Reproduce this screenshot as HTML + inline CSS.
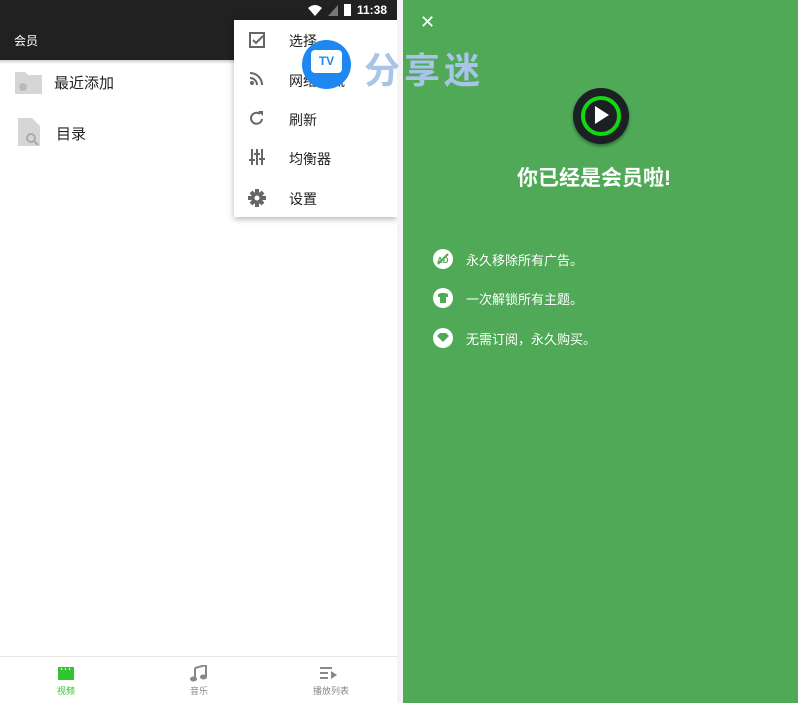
<!DOCTYPE html>
<html><head><meta charset="utf-8"><style>
*{margin:0;padding:0;box-sizing:border-box}
body{width:798px;height:703px;overflow:hidden;background:#fff;font-family:"Liberation Sans","Noto Sans CJK SC",sans-serif;position:relative}
.abs{position:absolute}
</style></head><body>
<div class="abs" style="left:0;top:0;width:397px;height:703px;background:#fff">
 <div class="abs" style="left:0;top:0;width:397px;height:60px;background:#212121"></div>
 <div class="abs" style="left:0;top:60px;width:397px;height:4px;background:linear-gradient(#ccc,#fff)"></div>
 <div class="abs" style="left:14px;top:32px;color:#fff;font-size:12px">会员</div>
 <div class="abs" style="right:10px;top:3px;color:#fff;font-size:12px;font-weight:bold;display:flex;align-items:center;gap:6px">
  <svg width="14" height="11"><path d="M0 3Q7-3 14 3L7 11Z" fill="#fff"/></svg>
  <svg width="10" height="11"><path d="M10 0V11H0Z" fill="#777"/></svg>
  <svg width="7" height="12"><rect width="7" height="12" fill="#fff"/></svg>
  <span>11:38</span></div>
 <svg class="abs" style="left:15px;top:70px" width="27" height="24"><path d="M0 2h10l3 3h14v19H0z" fill="#d6d6d6"/><circle cx="8" cy="17" r="4" fill="#bbb"/></svg>
 <div class="abs" style="left:54px;top:72px;font-size:15px;color:#222">最近添加</div>
 <svg class="abs" style="left:18px;top:118px" width="24" height="28"><path d="M0 0h14l8 8v20H0z" fill="#d6d6d6"/><circle cx="13" cy="20" r="4" fill="none" stroke="#aaa" stroke-width="2"/><path d="M16 23l4 4" stroke="#aaa" stroke-width="2"/></svg>
 <div class="abs" style="left:56px;top:123px;font-size:15px;color:#222">目录</div>
 <div class="abs" style="left:0;top:656px;width:397px;height:1px;background:#e6e6e6"></div>
 <svg class="abs" style="left:58px;top:667px" width="16" height="13"><rect width="16" height="13" fill="#2ec52e"/><path d="M3 1l1 2M7 1l1 2M11 1l1 2" stroke="#fff" stroke-width="1"/></svg>
 <div class="abs" style="left:57px;top:684px;font-size:9px;color:#2ec52e">视频</div>
 <svg class="abs" style="left:190px;top:665px" width="17" height="17"><path d="M5 3l11-3v12" fill="none" stroke="#888" stroke-width="2"/><path d="M5 3v11" stroke="#888" stroke-width="2"/><ellipse cx="3.5" cy="14" rx="3.5" ry="2.5" fill="#888"/><ellipse cx="13.5" cy="12" rx="3.5" ry="2.5" fill="#888"/></svg>
 <div class="abs" style="left:190px;top:684px;font-size:9px;color:#888">音乐</div>
 <svg class="abs" style="left:320px;top:667px" width="18" height="12"><path d="M0 1h12M0 6h8M0 11h8" stroke="#888" stroke-width="2"/><path d="M11 4l6 4-6 4z" fill="#888"/></svg>
 <div class="abs" style="left:313px;top:684px;font-size:9px;color:#888">播放列表</div>
 <div class="abs" style="left:234px;top:20px;width:163px;height:197px;background:#fff;box-shadow:0 2px 6px rgba(0,0,0,.3)">
  <svg class="abs" style="left:15px;top:12px" width="16" height="16"><path d="M1 1h14v14H1z" fill="none" stroke="#666" stroke-width="2"/><path d="M4 8l3 3 7-7" fill="none" stroke="#666" stroke-width="2"/></svg>
  <div class="abs" style="left:55px;top:11px;font-size:14px;color:#222">选择</div>
  <svg class="abs" style="left:16px;top:52px" width="13" height="13"><circle cx="2" cy="11" r="2" fill="#666"/><path d="M0 6a7 7 0 0 1 7 7M0 1a12 12 0 0 1 12 12" fill="none" stroke="#666" stroke-width="2"/></svg>
  <div class="abs" style="left:55px;top:51px;font-size:14px;color:#222">网络串流</div>
  <svg class="abs" style="left:15px;top:91px" width="15" height="15"><path d="M13 8A5.5 5.5 0 1 1 11 3" fill="none" stroke="#666" stroke-width="2"/><path d="M9 0h5v5z" fill="#666"/></svg>
  <div class="abs" style="left:55px;top:90px;font-size:14px;color:#222">刷新</div>
  <svg class="abs" style="left:15px;top:129px" width="16" height="16"><path d="M3 0v16M8 0v16M13 0v16" stroke="#666" stroke-width="2"/><path d="M0 11h6M5 5h6M10 10h6" stroke="#666" stroke-width="2"/></svg>
  <div class="abs" style="left:55px;top:129px;font-size:14px;color:#222">均衡器</div>
  <svg class="abs" style="left:14px;top:169px" width="18" height="18"><g stroke="#666" stroke-width="4"><path d="M9 0v18M0 9h18M3 3l12 12M15 3L3 15"/></g><circle cx="9" cy="9" r="6" fill="#666"/><circle cx="9" cy="9" r="2.5" fill="#fff"/></svg>
  <div class="abs" style="left:55px;top:169px;font-size:14px;color:#222">设置</div>
 </div>
 <div class="abs" style="left:302px;top:40px;width:49px;height:49px;border-radius:50%;background:#1e88f0"></div>
 <div class="abs" style="left:311px;top:50px;width:31px;height:23px;border-radius:4px;background:#fff;color:#1e88f0;font-size:12px;font-weight:bold;text-align:center;line-height:23px">TV</div>
</div>
<div class="abs" style="left:397px;top:0;width:6px;height:703px;background:#f4f4f4"></div>
<div class="abs" style="left:403px;top:0;width:395px;height:703px;background:#4fa957">
 <div class="abs" style="left:17px;top:12px;color:#fff;font-size:18px">✕</div>
 <div class="abs" style="left:170px;top:88px;width:56px;height:56px;border-radius:50%;background:#1c1f24;box-shadow:0 2px 3px rgba(0,0,0,.4)"></div>
 <div class="abs" style="left:178px;top:96px;width:40px;height:40px;border-radius:50%;border:4px solid #12d812"></div>
 <svg class="abs" style="left:192px;top:106px" width="14" height="18"><path d="M0 0l14 9-14 9z" fill="#fff"/></svg>
 <div class="abs" style="left:0;width:382px;top:162px;text-align:center;color:#fff;font-size:21px;font-weight:bold">你已经是会员啦!</div>
 <svg class="abs" style="left:30px;top:249px" width="20" height="20"><circle cx="10" cy="10" r="10" fill="#fff"/><path d="M5 15L15 5" stroke="#4fa957" stroke-width="2"/><text x="4" y="14" font-size="8" font-weight="bold" fill="#4fa957" font-family="Liberation Sans">AD</text></svg>
 <div class="abs" style="left:63px;top:250px;color:#fff;font-size:13px">永久移除所有广告。</div>
 <svg class="abs" style="left:30px;top:288px" width="20" height="20"><circle cx="10" cy="10" r="10" fill="#fff"/><path d="M5 6l3-1h4l3 1v3h-2v6H7V9H5z" fill="#4fa957"/></svg>
 <div class="abs" style="left:63px;top:289px;color:#fff;font-size:13px">一次解锁所有主题。</div>
 <svg class="abs" style="left:30px;top:328px" width="20" height="20"><circle cx="10" cy="10" r="10" fill="#fff"/><path d="M4 8l3-3h6l3 3-6 6z" fill="#4fa957"/></svg>
 <div class="abs" style="left:63px;top:329px;color:#fff;font-size:13px">无需订阅，永久购买。</div>
</div>
<div class="abs" style="left:364px;top:42px;color:#a8c4e6;font-size:36px;font-weight:bold;letter-spacing:4px">分享迷</div>
</body></html>
